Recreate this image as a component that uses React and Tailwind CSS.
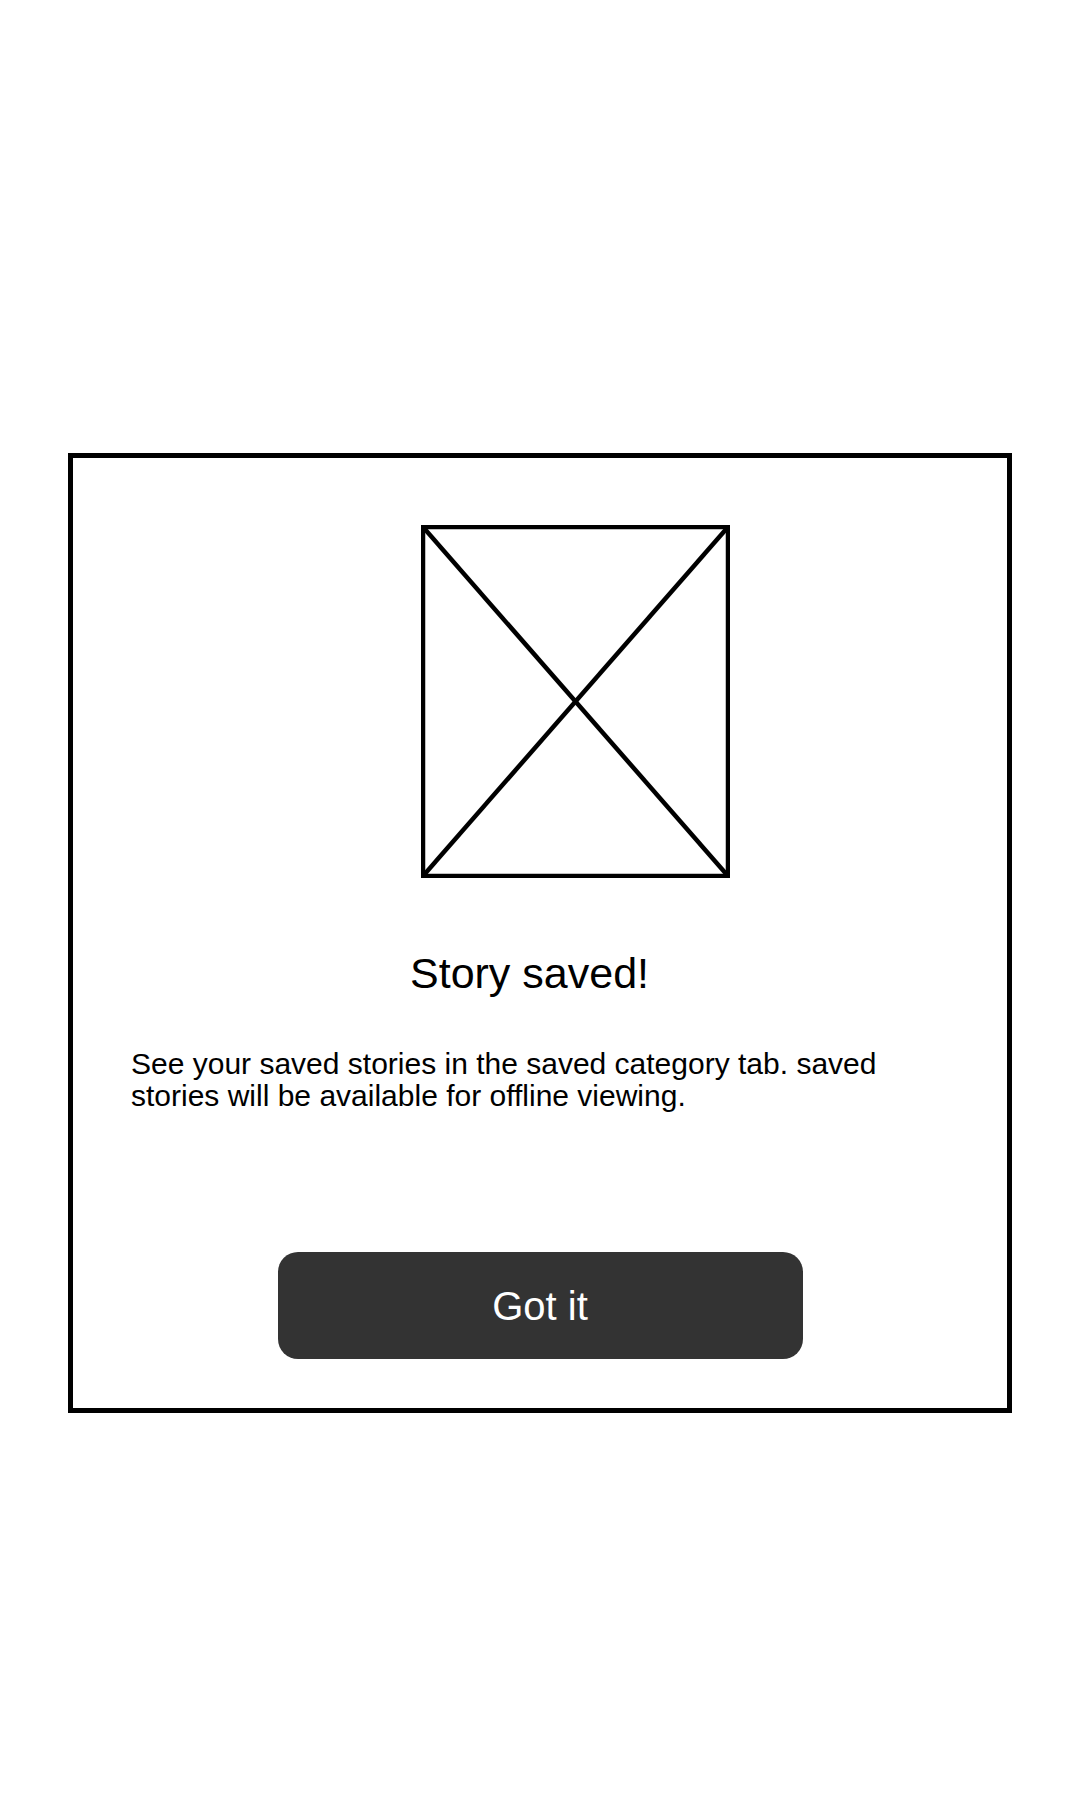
import React from "react";

const Placeholder = () => (
  <svg width="309" height="353" viewBox="0 0 309 353" className="block">
    <rect x="2" y="2" width="305" height="349" fill="none" stroke="#000" strokeWidth="4.5" />
    <line x1="2" y1="2" x2="307" y2="351" stroke="#000" strokeWidth="4.5" />
    <line x1="307" y1="2" x2="2" y2="351" stroke="#000" strokeWidth="4.5" />
  </svg>
);

export default function App() {
  return (
    <div
      className="min-h-screen bg-white pt-[453px]"
      style={{ fontFamily: '"Liberation Sans", Arial, sans-serif' }}
    >
      {/* Saved dialog */}
      <div className="mx-auto flex h-[960px] w-[944px] flex-col border-[5px] border-black pl-[58px]">
        <div className="ml-[290px] mt-[67px]">
          <Placeholder />
        </div>

        <h2 className="ml-[279px] mt-[71px] text-[43px] leading-[48px] font-normal text-black">
          Story saved!
        </h2>

        <p className="mt-[51px] w-[780px] text-[30px] leading-[32px] text-black">
          See your saved stories in the saved category tab. saved stories will be
          available for offline viewing.
        </p>

        <div className="mt-auto mb-[49px] -ml-[58px] flex justify-center">
          <button className="flex h-[107px] w-[525px] items-center justify-center rounded-[20px] bg-[#333333] text-[40px] text-white">
            Got it
          </button>
        </div>
      </div>
    </div>
  );
}
